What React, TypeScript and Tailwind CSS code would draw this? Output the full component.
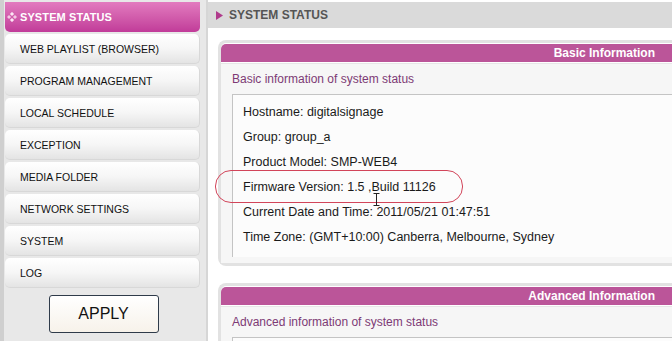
import React from 'react';

const menu = [
  'WEB PLAYLIST (BROWSER)',
  'PROGRAM MANAGEMENT',
  'LOCAL SCHEDULE',
  'EXCEPTION',
  'MEDIA FOLDER',
  'NETWORK SETTINGS',
  'SYSTEM',
  'LOG',
];

const basicInfo = [
  'Hostname: digitalsignage',
  'Group: group_a',
  'Product Model: SMP-WEB4',
  'Firmware Version: 1.5 ,Build 11126',
  'Current Date and Time: 2011/05/21 01:47:51',
  'Time Zone: (GMT+10:00) Canberra, Melbourne, Sydney',
];

const font = { fontFamily: '"Liberation Sans", Arial, sans-serif' };

const Panel: React.FC<{ title: string; subtitle: string; children?: React.ReactNode }> = ({ title, subtitle, children }) => (
  <div className="ml-[10px] border-[3px] border-r-0 border-[#e2e2e2] rounded-l-[8px] bg-white pt-px">
    <div className="h-[18px] bg-[#bb5599] flex items-center justify-end pr-[17px] rounded-tl-[5px]">
      <span className="text-white font-bold text-[12px] leading-none">{title}</span>
    </div>
    <div className="mt-px border-t border-[#e6e6e6] bg-[#f6f6f6] pl-[11px] pt-[8px] pb-[6px]">
      <p className="text-[12px] text-[#7d3a75] leading-[14px]">{subtitle}</p>
      <div className="mt-[8px] border-t border-l border-[#c4c4c4] bg-[#fcfcfc] min-h-[20px]">
        {children}
      </div>
    </div>
  </div>
);

export default function App() {
  return (
    <div className="w-[672px] h-[341px] overflow-hidden flex bg-white" style={font}>
      {/* sidebar */}
      <div className="w-[208px] shrink-0 h-full bg-[#e8e8e8] border-l-[4px] border-[#cfcfcf] border-r-[2px] border-r-[#d6d6d6] pl-px pr-[6px]">
        <div className="mt-[2px] h-[30px] rounded-b-[5px] bg-gradient-to-b from-[#e27bbf] to-[#c13b99] flex items-center pl-[2px] gap-[3px]">
          <svg width="10" height="10" viewBox="0 0 10 10">
            <rect x="3.5" y="0.5" width="3" height="3" transform="rotate(45 5 2)" fill="#fbe6f4" />
            <rect x="3.5" y="6.5" width="3" height="3" transform="rotate(45 5 8)" fill="#fbe6f4" />
            <rect x="0.5" y="3.5" width="3" height="3" transform="rotate(45 2 5)" fill="#f4c8e4" />
            <rect x="6.5" y="3.5" width="3" height="3" transform="rotate(45 8 5)" fill="#f4c8e4" />
          </svg>
          <span className="text-white font-bold text-[11px] tracking-[0.1px]">SYSTEM STATUS</span>
        </div>
        {menu.map(m => (
          <div
            key={m}
            className="mt-[2px] h-[30px] rounded-[5px] bg-gradient-to-b from-white via-[#f6f6f6] to-[#e4e4e4] border-b border-r border-[#d8d8d8] flex items-center pl-[15px] pt-[3px]"
          >
            <span className="text-[10.5px] text-[#111]">{m}</span>
          </div>
        ))}
        <div className="flex justify-center mt-[7px] pl-[2px]">
          <button className="w-[110px] h-[38px] rounded-[3px] border border-[#2f3b4a] bg-gradient-to-b from-white to-[#f7f2ea] text-[16px] text-[#111]">
            APPLY
          </button>
        </div>
      </div>

      {/* main */}
      <div className="flex-1 min-w-0 h-full bg-white relative">
        <div className="mt-[2px] h-[26px] bg-[#dadada] flex items-center pl-[8px] gap-[6px]">
          <svg width="7" height="9" viewBox="0 0 7 9"><polygon points="0,0 7,4.5 0,9" fill="#b03b8c" /></svg>
          <span className="font-bold text-[12px] text-[#555]">SYSTEM STATUS</span>
        </div>
        <div className="mt-[12px]">
          <Panel title="Basic Information" subtitle="Basic information of system status">
            <div className="pl-[10px] pt-[5px] pb-[7px]">
              {basicInfo.map(line => (
                <p key={line} className="text-[12.5px] text-[#1a1a1a] leading-[25px] whitespace-nowrap">{line}</p>
              ))}
            </div>
          </Panel>
        </div>
        <div className="mt-[17px]">
          <Panel title="Advanced Information" subtitle="Advanced information of system status" />
        </div>

        {/* highlight ellipse */}
        <div className="absolute left-[7px] top-[170px] w-[248px] h-[33px] rounded-[16px] border border-[#d2455a]" />
        {/* text cursor */}
        <svg className="absolute left-[165px] top-[193px]" width="7" height="13" viewBox="0 0 7 13">
          <path d="M0.5 0.5h6M3.5 0.5v12M0.5 12.5h6" stroke="#222" strokeWidth="1" fill="none" />
        </svg>
      </div>
    </div>
  );
}
